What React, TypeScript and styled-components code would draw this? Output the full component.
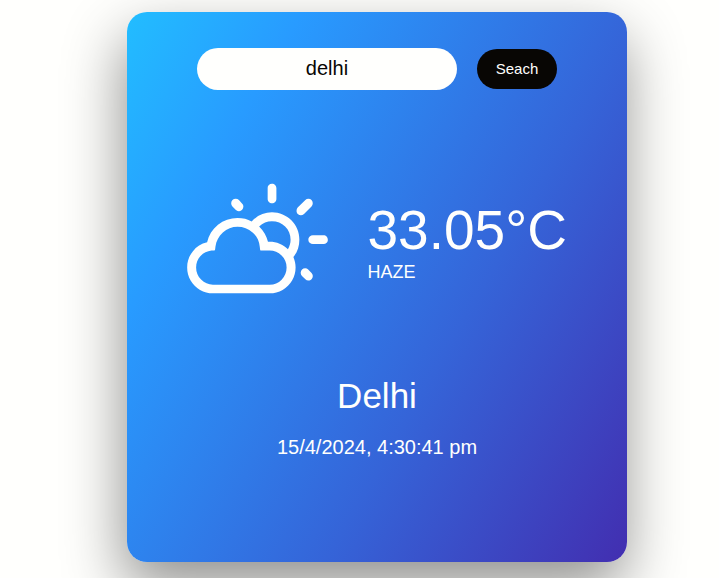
import React, { useState } from 'react';
import styled, { createGlobalStyle } from 'styled-components';
import { WiDayCloudy } from 'react-icons/wi';

const GlobalStyle = createGlobalStyle`
  * { box-sizing: border-box; margin: 0; padding: 0; }
  body {
    background: #fffffd;
    font-family: "Liberation Sans", Arial, sans-serif;
    overflow: hidden;
  }
`;

const Page = styled.main`
  display: flex;
  align-items: flex-start;
  height: 100vh;
  padding: 12px 0 0 127px;
`;

const Card = styled.section`
  display: flex;
  flex-direction: column;
  align-items: center;
  flex: none;
  width: 500px;
  height: 550px;
  padding-top: 36px;
  border-radius: 20px;
  color: #fffffd;
  background: linear-gradient(120deg, #22bdff 0%, #289bff 21.5%, #3564d8 63%, #422eb0 100%);
  box-shadow: -3px 25px 60px rgba(0, 0, 0, 0.44);
`;

const SearchBar = styled.form`
  display: flex;
  align-items: center;
  gap: 20px;
`;

const SearchInput = styled.input`
  width: 260px;
  height: 42px;
  padding-bottom: 1px;
  border: 0;
  border-radius: 21px;
  outline: 0;
  background: #fffffd;
  color: #080604;
  font: 20px "Liberation Sans", Arial, sans-serif;
  text-align: center;
`;

const SearchButton = styled.button`
  width: 80px;
  height: 40px;
  padding-bottom: 2px;
  border: 0;
  border-radius: 20px;
  background: #080604;
  color: #fffffd;
  font: 15px "Liberation Sans", Arial, sans-serif;
`;

const Conditions = styled.div`
  display: flex;
  align-self: flex-start;
  align-items: flex-start;
  gap: 31.5px;
  margin: 88.5px 0 0 52px;
`;

const Reading = styled.div`
  display: flex;
  flex-direction: column;
  margin-top: 19.5px;
`;

const Temperature = styled.p`
  font-size: 55px;
  line-height: 64px;
  white-space: nowrap;
`;

const Description = styled.p`
  font-size: 18px;
  line-height: 20px;
`;

const City = styled.h1`
  margin-top: 40.5px;
  font-size: 35px;
  line-height: 40px;
  font-weight: 400;
`;

const Timestamp = styled.p`
  margin-top: 20px;
  font-size: 20px;
  line-height: 23px;
`;

export default function App() {
  const [query, setQuery] = useState('delhi');

  return (
    <>
      <GlobalStyle />
      <Page>
        <Card>
          <SearchBar onSubmit={(e) => e.preventDefault()}>
            <SearchInput value={query} onChange={(e) => setQuery(e.target.value)} />
            <SearchButton type="submit">Seach</SearchButton>
          </SearchBar>
          <Conditions>
            <WiDayCloudy size={157} />
            <Reading>
              <Temperature>33.05°C</Temperature>
              <Description>HAZE</Description>
            </Reading>
          </Conditions>
          <City>Delhi</City>
          <Timestamp>15/4/2024, 4:30:41 pm</Timestamp>
        </Card>
      </Page>
    </>
  );
}
